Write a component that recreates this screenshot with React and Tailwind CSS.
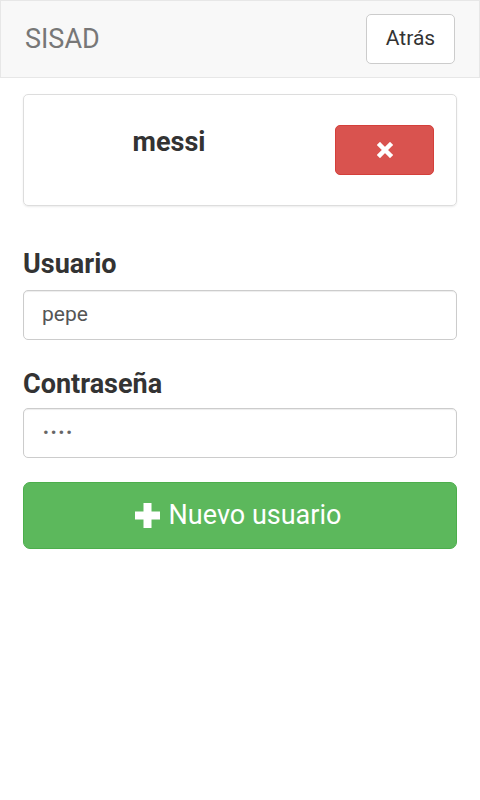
import React from "react";

export default function App() {
  return (
    <div className="w-[480px] h-[800px] bg-white" style={{ fontFamily: "Roboto, 'Liberation Sans', sans-serif" }}>
      <nav className="h-[78px] bg-[#f8f8f8] border border-[#e7e7e7] flex items-center justify-between pl-[24px] pr-[24px]">
        <span className="text-[27px] text-[#777] leading-none">SISAD</span>
        <button className="w-[89px] h-[50px] bg-white border border-[#ccc] rounded-[5px] text-[21px] text-[#333]">Atrás</button>
      </nav>
      <div className="px-[23px]">
        <div className="mt-[16px] h-[112px] border border-[#ddd] rounded-[5px] shadow-[0_1px_2px_rgba(0,0,0,0.08)] flex">
          <div className="w-[290px] text-center pt-[34px]">
            <span className="text-[27px] font-bold text-[#333] leading-none">messi</span>
          </div>
          <div className="pl-[21px] pt-[30px]">
            <button className="w-[99px] h-[50px] bg-[#d9534f] border border-[#d43f3a] rounded-[5px] flex items-center justify-center">
              <svg width="16" height="16" viewBox="0 0 16 16">
                <path d="M3 3 L13 13 M13 3 L3 13" stroke="white" strokeWidth="4.5" strokeLinecap="square" />
              </svg>
            </button>
          </div>
        </div>
        <label className="block mt-[43px] text-[27px] font-bold text-[#333] leading-[30px]">Usuario</label>
        <div className="mt-[11px] h-[50px] border border-[#ccc] rounded-[5px] shadow-[inset_0_1px_1px_rgba(0,0,0,0.075)] flex items-center px-[18px] text-[21px] text-[#555]">pepe</div>
        <label className="block mt-[29px] text-[27px] font-bold text-[#333] leading-[30px]">Contraseña</label>
        <div className="mt-[9px] h-[50px] border border-[#ccc] rounded-[5px] shadow-[inset_0_1px_1px_rgba(0,0,0,0.075)] flex items-center px-[19px] text-[17px] text-[#666] tracking-[2px]">••••</div>
        <button className="mt-[24px] w-full h-[67px] bg-[#5cb85c] border border-[#4cae4c] rounded-[7px] flex items-center justify-center gap-[9px] text-white text-[27px]">
          <svg width="25" height="25" viewBox="0 0 25 25" className="-ml-[4px]">
            <rect x="8.5" y="0" width="8" height="25" fill="white" />
            <rect x="0" y="8.5" width="25" height="8" fill="white" />
          </svg>
          <span>Nuevo usuario</span>
        </button>
      </div>
    </div>
  );
}
